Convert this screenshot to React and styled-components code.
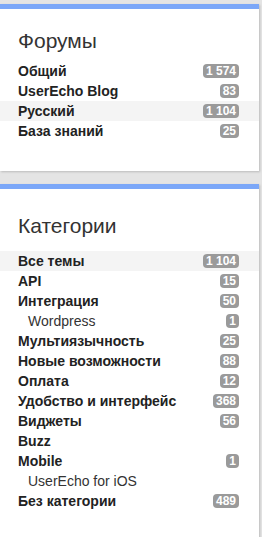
import styled, { createGlobalStyle } from "styled-components";

const GlobalStyle = createGlobalStyle`
  html, body {
    margin: 0;
    padding: 0;
    background: #e4e4e4;
  }
  body {
    font-family: "Liberation Sans", Arial, sans-serif;
    color: #222;
  }
`;

const Page = styled.div`
  padding-top: 4px;
  display: flex;
  flex-direction: column;
  gap: 13px;
  width: 259px;
`;

const Panel = styled.section`
  background: #ffffff;
  border-top: 5px solid #7ba7f8;
  box-shadow: 1px 1px 2px rgba(0, 0, 0, 0.18);
  padding: ${({ $top }) => $top}px 0 ${({ $bottom }) => $bottom}px;
`;

const Title = styled.h2`
  margin: 0 0 ${({ $gap }) => $gap}px;
  padding: 0 18px;
  font-size: 21px;
  line-height: 24px;
  font-weight: normal;
  color: #333;
`;

const List = styled.ul`
  list-style: none;
  margin: 0;
  padding: 0;
`;

const Row = styled.li`
  display: flex;
  align-items: center;
  justify-content: space-between;
  height: 20px;
  padding: 0 20px 0 ${({ $sub }) => ($sub ? 28 : 18)}px;
  background: ${({ $active }) => ($active ? "#f4f4f4" : "transparent")};
`;

const Name = styled.span`
  font-size: 14px;
  line-height: 20px;
  font-weight: ${({ $sub }) => ($sub ? "normal" : "bold")};
  color: ${({ $sub }) => ($sub ? "#333" : "#222")};
`;

const Badge = styled.span`
  display: inline-flex;
  align-items: center;
  height: 14px;
  padding: 0 3px;
  border-radius: 4px;
  background: #9a9a9a;
  color: #fff;
  font-size: 12px;
  font-weight: bold;
  line-height: 14px;
`;

const forums = [
  { name: "Общий", count: "1 574" },
  { name: "UserEcho Blog", count: "83" },
  { name: "Русский", count: "1 104", active: true },
  { name: "База знаний", count: "25" },
];

const categories = [
  { name: "Все темы", count: "1 104", active: true },
  { name: "API", count: "15" },
  { name: "Интеграция", count: "50" },
  { name: "Wordpress", count: "1", sub: true },
  { name: "Мультиязычность", count: "25" },
  { name: "Новые возможности", count: "88" },
  { name: "Оплата", count: "12" },
  { name: "Удобство и интерфейс", count: "368" },
  { name: "Виджеты", count: "56" },
  { name: "Buzz" },
  { name: "Mobile", count: "1" },
  { name: "UserEcho for iOS", sub: true },
  { name: "Без категории", count: "489" },
];

function Items({ items }) {
  return (
    <List>
      {items.map((it) => (
        <Row key={it.name} $sub={it.sub} $active={it.active}>
          <Name $sub={it.sub}>{it.name}</Name>
          {it.count && <Badge>{it.count}</Badge>}
        </Row>
      ))}
    </List>
  );
}

export default function App() {
  return (
    <>
      <GlobalStyle />
      <Page>
        <Panel $top={20} $bottom={30}>
          <Title $gap={8}>Форумы</Title>
          <Items items={forums} />
        </Panel>
        <Panel $top={25} $bottom={40}>
          <Title $gap={13}>Категории</Title>
          <Items items={categories} />
        </Panel>
      </Page>
    </>
  );
}
